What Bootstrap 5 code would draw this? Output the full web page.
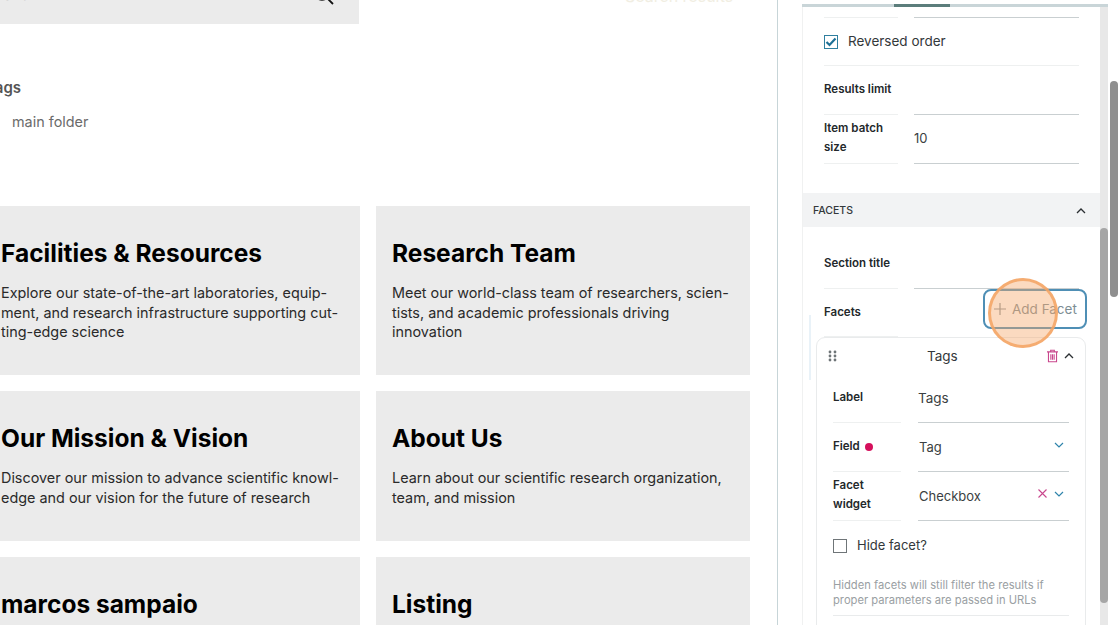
<!DOCTYPE html>
<html lang="en">
<head>
<meta charset="utf-8">
<title>Facets</title>
<link rel="stylesheet" href="https://cdn.jsdelivr.net/npm/bootstrap@5.3.0/dist/css/bootstrap.min.css">
<style>
html,body{height:625px;overflow:hidden;background:#fff}
body{font-family:"Inter","Liberation Sans",sans-serif;color:#000}
.stage{height:625px;width:1120px;overflow:hidden}
.pagepane{width:778px;height:625px;border-right:1px solid #c7d5d8;overflow:hidden;flex:none}
.toparea{height:24px;display:flex;overflow:hidden}
.searchband{width:374px;height:24px;margin-left:-15px;background:#ebebeb;position:relative;overflow:hidden;flex:none}
.bandtext{font-size:15px;color:#a5a5a5;line-height:16px;margin:-13px 0 0 18px}
.lens{position:absolute;left:329px;top:-15px}
.topghost{margin-left:266px;height:4px;font-size:16px;color:#f1eee2;line-height:16px;overflow:hidden}
.topghost span{display:block;margin-top:-12px}
.tagsblock{margin-top:52px;height:130px}
.tagstitle{font-size:15px;font-weight:600;color:#555;margin:0 0 0 -14px;line-height:24px;white-space:nowrap}
.tagsitem{font-size:14.4px;color:#6b6b6b;margin:10px 0 0 12px;line-height:24px}
.tilegrid{display:grid;grid-template-columns:375px 374px;column-gap:16px;row-gap:16px;margin-left:-15px}
.tile{background:#ebebeb;padding:29px 16px 0;}
.tile-a{height:169px}
.tile-b{height:150px}
.tile-c{height:100px}
.tile h2{font-size:24.5px;font-weight:700;line-height:36px;margin:0 0 12px;color:#000}
.tile p{font-size:14.4px;line-height:19.6px;margin:0;color:#2a2a2a}
.railgap{width:24px;flex:none}
.rail{width:306px;flex:none;height:625px;position:relative}
.railtop{height:3px;margin-top:4px;background:#c9d5d8;display:flex;position:relative;z-index:2}
.railtop i{display:block;width:56px;margin-left:92px;background:#5b7d7b}
.railbody{height:618px;overflow:hidden;display:flex}
.railform{width:298px;flex:none;font-size:13.5px;color:#2f3437;border-left:1px solid #f0f1f1}
.track{width:8px;flex:none;background:#e8e8e8;position:relative}
.thumb{position:absolute;left:0;width:8px;background:#a6a6a6;border-radius:4px;top:221px;height:375px}
.outerbar{width:8px;flex:none;margin-left:2px;height:625px;position:relative}
.outerthumb{position:absolute;left:0;top:81px;height:216px;width:8px;background:#8f8f8f;border-radius:4px}
.zone{padding:0 21px 0 21px}
.frow{display:flex;gap:16px}
.lab{width:74px;flex:none;font-size:11.5px;font-weight:600;color:#23282b;border-bottom:1px solid #eef0f0;display:flex;align-items:center;line-height:19.5px}
.val{flex:1;border-bottom:1px solid #c9cfd1;display:flex;align-items:center;font-size:13px;color:#3b3f42}
.toprule{height:11px;display:flex;gap:16px}
.toprule b{display:block;width:74px;border-bottom:1px solid #eef0f0}
.toprule u{display:block;flex:1;border-bottom:1px solid #c9cfd1}
.chkline{height:48px;display:flex;align-items:center;gap:10px;border-bottom:1px solid #eef0f0;font-size:13.5px;color:#33383b}
.chkbox{width:14px;height:14px;border:1px solid #2f7f9f;display:flex;align-items:center;justify-content:center;flex:none}
.r-lim{height:49px}
.r-lim .lab{align-items:flex-start;padding-top:14px}
.r-batch{height:49px}
.r-batch .lab{padding-bottom:2px}
.facethead{margin-top:29px;height:34px;background:#f2f3f4;display:flex;align-items:center;justify-content:space-between;padding:1px 14px 0 10px;font-size:10.5px;font-weight:500;color:#33383b}
.r-title{height:62px}
.r-title .lab{padding-top:12px}
.facetrow{height:49px;display:flex;justify-content:space-between;align-items:flex-start}
.flab{width:74px;height:48px;border-bottom:1px solid #eef0f0;font-size:11.5px;font-weight:600;color:#23282b;padding-top:15px}
.addbtn{width:104px;height:40px;border:2px solid #4f8fb5;border-radius:8px;background:#fff;color:#7d8d94;font-size:13.5px;display:flex;align-items:center;gap:6px;padding:0 0 0 9px;margin-right:-8px}
.clickdot{position:absolute;left:186px;top:278px;width:70px;height:70px;border-radius:50%;background:rgba(246,166,104,.42);border:3px solid rgba(244,165,100,.85);z-index:3}
.sidegleam{position:absolute;left:7px;top:315px;width:2px;height:65px;background:#e9f2f8}
.fcard{margin:-1px -7px 0 -8px;height:400px;border:1px solid #e9ebec;border-radius:9px;padding:0 16px}
.fchead{height:36px;display:flex;align-items:center;margin:0 -5px;font-size:13.5px;color:#33383b}
.fctitle{margin-left:90px}
.fcicons{margin-left:auto;display:flex;align-items:center;gap:6px}
.frow.inner{gap:17px;height:49px}
.inner .lab{width:68px;padding-bottom:2px}
.inner .val{padding:2px 0 0 1px}
.inner.cl-label .lab{padding-bottom:0}
.inner.cl-label .val{font-size:13.5px;padding:1px 0 0 0}
.inner.cl-field .lab{gap:5px;padding-bottom:0}
.dot{width:8px;height:8px;border-radius:50%;background:#d5105c;display:block}
.endicons{margin-left:auto;display:flex;gap:7px;align-items:center;padding-right:5px;margin-top:-7px}
.hide{height:49px;display:flex;align-items:center;gap:10px;font-size:13px;color:#33383b}
.hide .box0{width:14px;height:14px;border:1px solid #6f7578}
.hint{font-size:11.2px;line-height:14.7px;color:#9aa0a3;padding:8px 0 8px;border-bottom:1px solid #e9ebec}
</style>
</head>
<body>
<div class="stage d-flex">
  <main class="pagepane">
    <div class="toparea">
      <div class="searchband">
        <div class="bandtext">Search</div>
        <svg class="lens" width="22" height="22" viewBox="0 0 22 22"><circle cx="8" cy="8" r="7" fill="none" stroke="#111" stroke-width="1.6"/><path d="M13 13l6 6" stroke="#111" stroke-width="1.8" fill="none"/></svg>
      </div>
      <div class="topghost"><span>Search results</span></div>
    </div>
    <section class="tagsblock">
      <h3 class="tagstitle">Tags</h3>
      <div class="tagsitem">main folder</div>
    </section>
    <div class="tilegrid">
      <article class="tile tile-a"><h2>Facilities &amp; Resources</h2><p>Explore our state-of-the-art laboratories, equip-<br>ment, and research infrastructure supporting cut-<br>ting-edge science</p></article>
      <article class="tile tile-a"><h2>Research Team</h2><p>Meet our world-class team of researchers, scien-<br>tists, and academic professionals driving<br>innovation</p></article>
      <article class="tile tile-b"><h2>Our Mission &amp; Vision</h2><p>Discover our mission to advance scientific knowl-<br>edge and our vision for the future of research</p></article>
      <article class="tile tile-b"><h2>About Us</h2><p>Learn about our scientific research organization,<br>team, and mission</p></article>
      <article class="tile tile-c"><h2>marcos sampaio</h2></article>
      <article class="tile tile-c"><h2>Listing</h2></article>
    </div>
  </main>
  <div class="railgap"></div>
  <aside class="rail">
    <div class="railtop"><i></i></div>
    <div class="railbody">
      <form class="railform">
        <div class="zone">
          <div class="toprule"><b></b><u></u></div>
          <div class="chkline"><span class="chkbox"><svg width="12" height="10" viewBox="0 0 12 10"><path d="M1.500 5l3 3 6-6.500" fill="none" stroke="#1d7096" stroke-width="2.200"/></svg></span>Reversed order</div>
          <div class="frow r-lim"><div class="lab">Results limit</div><div class="val"></div></div>
          <div class="frow r-batch"><div class="lab">Item batch size</div><div class="val">10</div></div>
        </div>
        <div class="facethead"><span>FACETS</span><svg width="10" height="6" viewBox="0 0 10 6"><path d="M1 5l4-4 4 4" fill="none" stroke="#2b2f32" stroke-width="1.300"/></svg></div>
        <div class="zone">
          <div class="frow r-title"><div class="lab">Section title</div><div class="val"></div></div>
          <div class="facetrow"><span class="flab">Facets</span><button type="button" class="addbtn"><svg width="12" height="12" viewBox="0 0 12 12"><path d="M6 0v12M0 6h12" stroke="#8b9498" stroke-width="1.200"/></svg>Add Facet</button></div>
          <div class="fcard">
            <div class="fchead">
              <svg width="9" height="12" viewBox="0 0 9 12" fill="#6e7477"><circle cx="2" cy="2" r="1.400"/><circle cx="7" cy="2" r="1.400"/><circle cx="2" cy="6" r="1.400"/><circle cx="7" cy="6" r="1.400"/><circle cx="2" cy="10" r="1.400"/><circle cx="7" cy="10" r="1.400"/></svg>
              <span class="fctitle">Tags</span>
              <span class="fcicons">
                <svg width="11" height="14" viewBox="0 0 12 14" fill="none" stroke="#c9478d" stroke-width="1.200"><path d="M0 2.500h12M4 2.500V.700h4v1.800M1.600 2.500v10.800h8.800V2.500M4.200 5v6M6 5v6M7.800 5v6"/></svg>
                <svg width="10" height="6" viewBox="0 0 10 6"><path d="M1 5l4-4 4 4" fill="none" stroke="#2b2f32" stroke-width="1.300"/></svg>
              </span>
            </div>
            <div class="frow inner cl-label"><div class="lab">Label</div><div class="val">Tags</div></div>
            <div class="frow inner cl-field"><div class="lab">Field <span class="dot"></span></div><div class="val">Tag<span class="endicons"><svg width="10" height="6" viewBox="0 0 10 6"><path d="M1 1l4 4 4-4" fill="none" stroke="#2f84ab" stroke-width="1.200"/></svg></span></div></div>
            <div class="frow inner cl-wid"><div class="lab">Facet widget</div><div class="val">Checkbox<span class="endicons"><svg width="9" height="9" viewBox="0 0 9 9"><path d="M.5.500l8 8M8.500.500l-8 8" stroke="#c9478d" stroke-width="1.100"/></svg><svg width="10" height="6" viewBox="0 0 10 6"><path d="M1 1l4 4 4-4" fill="none" stroke="#2f84ab" stroke-width="1.200"/></svg></span></div></div>
            <div class="hide"><span class="box0"></span>Hide facet?</div>
            <div class="hint">Hidden facets will still filter the results if proper parameters are passed in URLs</div>
          </div>
        </div>
      </form>
      <div class="track"><div class="thumb"></div></div>
    </div>
    <div class="sidegleam"></div>
    <div class="clickdot"></div>
  </aside>
  <div class="outerbar"><div class="outerthumb"></div></div>
</div>
<script src="https://cdn.jsdelivr.net/npm/bootstrap@5.3.0/dist/js/bootstrap.bundle.min.js"></script>
</body>
</html>
